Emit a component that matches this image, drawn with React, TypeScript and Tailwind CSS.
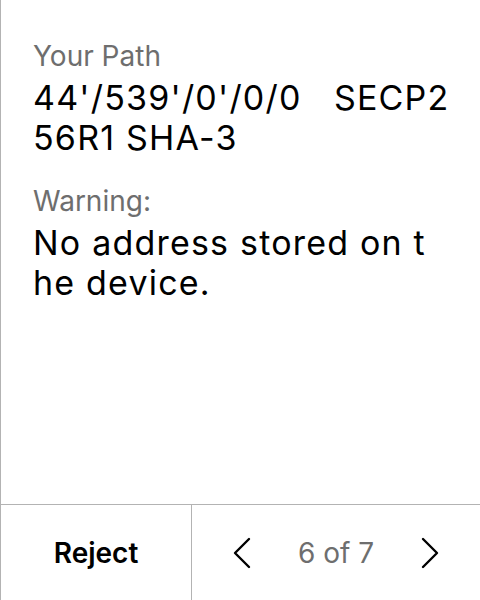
function Field({ label, lines }: { label: string; lines: string[] }) {
  return (
    <div className="flex flex-col">
      <span className="text-[28px] leading-[36px] text-[#6e6e6e]">{label}</span>
      <div className="flex flex-col mt-[4px] text-[34px] leading-[40px] tracking-[1.2px] text-black whitespace-pre">
        {lines.map((line, i) => (
          <span key={i}>{line}</span>
        ))}
      </div>
    </div>
  );
}

function Chevron({ dir }: { dir: 'left' | 'right' }) {
  return (
    <svg width="18" height="32" viewBox="0 0 18 32" fill="none" stroke="black" strokeWidth="2.4" strokeLinecap="round" strokeLinejoin="round">
      {dir === 'left' ? <polyline points="16,2 2,16 16,30" /> : <polyline points="2,2 16,16 2,30" />}
    </svg>
  );
}

export default function App() {
  return (
    <div className="w-[480px] h-[600px] bg-white border-l border-[#b3b3b3] flex flex-col font-['Inter',sans-serif]">
      <div className="flex-1 flex flex-col gap-[25px] pl-[32px] pr-[24px] pt-[38px]">
        <Field label="Your Path" lines={["44'/539'/0'/0/0   SECP2", '56R1 SHA-3']} />
        <Field label="Warning:" lines={['No address stored on t', 'he device.']} />
      </div>
      <div className="h-[96px] border-t border-[#b3b3b3] flex">
        <button className="w-[191px] border-r border-[#b3b3b3] flex items-center justify-center text-[28px] font-semibold text-black">
          Reject
        </button>
        <div className="flex-1 flex items-center">
          <div className="w-[100px] flex justify-center">
            <Chevron dir="left" />
          </div>
          <span className="flex-1 text-center text-[28px] text-[#6e6e6e]">6 of 7</span>
          <div className="w-[100px] flex justify-center">
            <Chevron dir="right" />
          </div>
        </div>
      </div>
    </div>
  );
}
